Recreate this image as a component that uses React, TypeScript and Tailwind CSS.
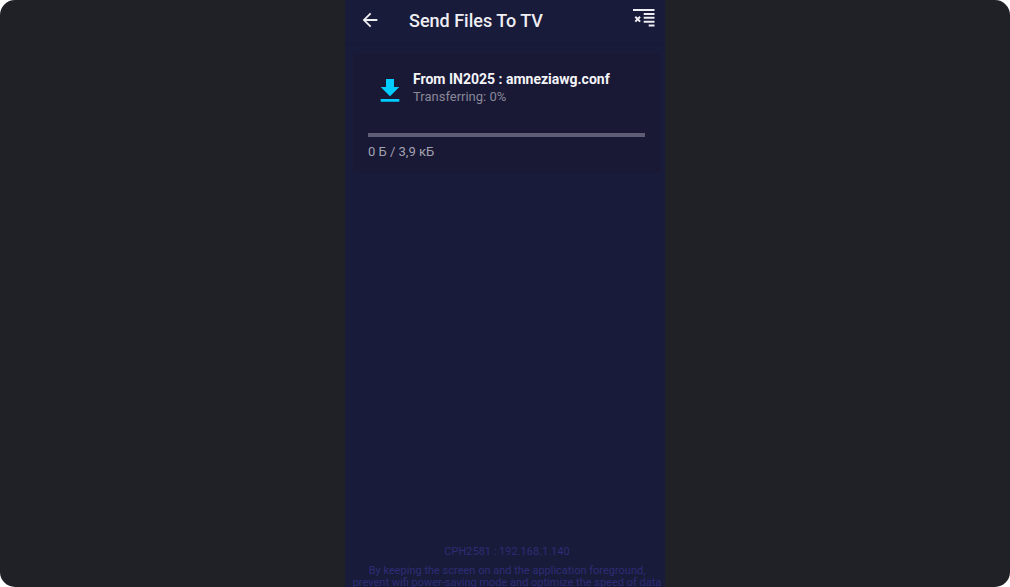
import React from "react";

type Transfer = {
  title: string;
  status: string;
  percent: number;
  amount: string;
};

const transfer: Transfer = {
  title: "From IN2025 : amneziawg.conf",
  status: "Transferring: 0%",
  percent: 0,
  amount: "0 Б / 3,9 кБ",
};

function BackIcon() {
  return (
    <svg viewBox="0 0 24 24" className="size-[22px]" fill="currentColor" aria-hidden="true">
      <path d="M20 11H7.83l5.59-5.59L12 4l-8 8 8 8 1.41-1.41L7.83 13H20v-2z" />
    </svg>
  );
}

function ClearListIcon() {
  return (
    <svg viewBox="0 0 22 18" className="h-[18px] w-[22px]" fill="currentColor" aria-hidden="true">
      <path d="M0 0h21.5v2H0zM10.7 4h10.8v2H10.7zM10.7 7.8h10.8v2H10.7zM10.7 11.7h10.8v2H10.7zM15.7 15.6h5.8v2h-5.8z" />
      <path d="M2.3 7.8l4.8 4.8M7.1 7.8l-4.8 4.8" stroke="currentColor" strokeWidth="2" />
    </svg>
  );
}

function DownloadIcon() {
  return (
    <svg viewBox="0 0 24 24" className="size-8 text-[#00ccff]" fill="currentColor" aria-hidden="true">
      <path d="M19 9h-4V3H9v6H5l7 7 7-7zM5 18v2h14v-2H5z" />
    </svg>
  );
}

function TransferCard({ item }: { item: Transfer }) {
  return (
    <section className="mt-2 mr-1 ml-2 rounded-sm bg-[#191936] pt-4 pr-4 pb-3 pl-[15px]">
      <div className="flex items-start gap-[7px] pl-[6px]">
        <div className="pt-[6px]">
          <DownloadIcon />
        </div>
        <div className="pt-px">
          <h2 className="text-[14px] leading-[18px] font-bold text-[#f4f4f8]">{item.title}</h2>
          <p className="text-[13px] leading-[18px] text-[#898897]">{item.status}</p>
        </div>
      </div>
      <div
        role="progressbar"
        aria-label={item.title}
        aria-valuenow={item.percent}
        className="mt-[26px] h-1 bg-[#5f5d76]"
      >
        <div className="h-full bg-[#00ccff]" style={{ width: `${item.percent}%` }} />
      </div>
      <p className="mt-[6px] text-[13px] leading-[18px] text-[#a3a2b1]">{item.amount}</p>
    </section>
  );
}

export default function App() {
  return (
    <div className="h-screen bg-white font-['Roboto',sans-serif]">
      <div className="flex h-full justify-center overflow-hidden rounded-[15px] bg-[#202126]">
        <div className="flex w-full max-w-80 flex-col bg-[#191b3a]">
          <header className="flex h-[45px] items-start border-b border-[#181834] pr-[10px] pl-[14px] text-[#eeeef3]">
            <button type="button" aria-label="Back" className="mt-[9px]">
              <BackIcon />
            </button>
            <h1 className="mt-[9px] ml-7 flex-1 text-[18px] leading-6 font-medium">Send Files To TV</h1>
            <button type="button" aria-label="Clear list" className="mt-[9px]">
              <ClearListIcon />
            </button>
          </header>
          <main className="flex-1">
            <TransferCard item={transfer} />
          </main>
          <footer className="h-11 pl-1 text-center text-[11px] leading-3 text-[#2c2d76]">
            <p className="pt-[3px]">CPH2581 : 192.168.1.140</p>
            <p className="mt-[7px] whitespace-nowrap">
              By keeping the screen on and the application foreground,
              <br />
              prevent wifi power-saving mode and optimize the speed of data
            </p>
          </footer>
        </div>
      </div>
    </div>
  );
}
